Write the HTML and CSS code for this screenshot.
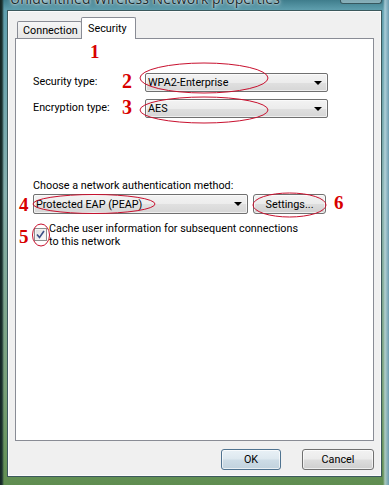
FILE: index.html
```html
<!DOCTYPE html>
<html>
<head>
<meta charset="utf-8">
<link rel="stylesheet" href="styles.css">
</head>
<body>
<div class="frame">
  <div class="titlebar">
    <span class="title">Unidentified Wireless Network properties</span>
    <span class="closebtn"></span>
  </div>
  <div class="dialog">
    <div class="tabs">
      <div class="tab">Connection</div>
      <div class="tab active">Security</div>
    </div>
    <div class="panel">
      <div class="mark-row"><span class="mark">1</span></div>
      <div class="field first">
        <span class="label">Security type:</span>
        <span class="mark">2</span>
        <div class="combo"><span class="combo-text">WPA2-Enterprise</span><span class="arrow"></span></div>
      </div>
      <div class="field">
        <span class="label">Encryption type:</span>
        <span class="mark">3</span>
        <div class="combo"><span class="combo-text">AES</span><span class="arrow"></span></div>
      </div>
      <div class="caption">Choose a network authentication method:</div>
      <div class="method-row">
        <span class="mark side">4</span>
        <div class="combo method"><span class="combo-text">Protected EAP (PEAP)</span><span class="arrow"></span></div>
        <div class="btn settings">Settings...</div>
        <span class="mark after">6</span>
      </div>
      <div class="check-row">
        <span class="mark side">5</span>
        <span class="checkbox">
          <svg width="9" height="9" viewBox="0 0 9 9"><path d="M1 4.5 L3.5 7.5 L8 1" fill="none" stroke="#3b4f86" stroke-width="1.6"/></svg>
        </span>
        <span class="check-text">Cache user information for subsequent connections<br>to this network</span>
      </div>
    </div>
    <div class="buttons">
      <div class="btn ok">OK</div>
      <div class="btn cancel">Cancel</div>
    </div>
  </div>
  <div class="bottom"></div>
  <svg class="annotations" width="389" height="485" viewBox="0 0 389 485">
    <g fill="none" stroke="#c8102e" stroke-width="1">
      <ellipse cx="108" cy="28" rx="26" ry="9"/>
      <ellipse cx="204" cy="78" rx="64" ry="15"/>
      <ellipse cx="204" cy="110" rx="64" ry="13"/>
      <ellipse cx="94" cy="204" rx="61" ry="9.5"/>
      <ellipse cx="41" cy="235" rx="8.5" ry="11"/>
      <ellipse cx="289.5" cy="205" rx="36.5" ry="12"/>
    </g>
  </svg>
</div>
</body>
</html>
```

FILE: styles.css
```css
* { box-sizing: border-box; }
html, body { margin: 0; padding: 0; }
body {
  width: 389px;
  height: 485px;
  overflow: hidden;
  font-family: Roboto, "Liberation Sans", sans-serif;
  font-size: 10.8px;
  color: #000;
}
.frame {
  position: relative;
  width: 389px;
  height: 485px;
  display: flex;
  flex-direction: column;
  background:
    linear-gradient(to right, #132321 0, #1d3331 2px, rgba(0,0,0,0) 4px, rgba(0,0,0,0) 383px, rgba(200,225,235,0.7) 385px, #6c9cb0 389px),
    linear-gradient(to bottom, #3f7d8c 0, #5f9fae 10px, #86b0ae 40%, #78a078 80%, #5f8d50 100%);
}
.titlebar {
  height: 10px;
  overflow: hidden;
  display: flex;
  justify-content: space-between;
  padding: 0 7px 0 10px;
}
.title {
  font-family: "Open Sans", sans-serif;
  font-size: 14px;
  line-height: 14px;
  margin-top: -8px;
  color: #1a2a2c;
  text-shadow: 0 0 5px #ffffff, 0 0 2px #ffffff;
}
.closebtn {
  width: 42px;
  height: 4px;
  border: 1px solid #37585f;
  border-top: none;
  border-radius: 0 0 3px 3px;
  background: rgba(255,255,255,0.35);
}
.dialog {
  flex: 1;
  margin: 0 7px;
  background: #f0f0f0;
  border: 1px solid #3b585c;
  box-shadow: inset 0 0 0 1px #fbfbfb;
  display: flex;
  flex-direction: column;
}
.tabs {
  height: 27px;
  display: flex;
  align-items: flex-end;
  padding-left: 9px;
}
.tab {
  height: 17px;
  width: 65px;
  border: 1px solid #898c95;
  border-bottom: none;
  border-radius: 2px 2px 0 0;
  background: linear-gradient(#f6f6f6, #e6e6e6);
  display: flex;
  align-items: center;
  padding-left: 5px;
  line-height: 13px;
}
.tab.active {
  position: relative;
  z-index: 1;
  height: 22px;
  width: 55px;
  margin-left: -1px;
  margin-bottom: -1px;
  background: #ffffff;
  padding-left: 6px;
  padding-bottom: 1px;
}
.panel {
  height: 403px;
  margin: 0 7px;
  background: #ffffff;
  border: 1px solid #898c95;
  padding-left: 17px;
}
.mark {
  font-family: "Liberation Serif", serif;
  font-weight: bold;
  font-size: 19px;
  line-height: 19px;
  color: #d80000;
}
.mark-row {
  height: 19px;
  margin-top: 3px;
  padding-left: 57px;
}
.field {
  display: grid;
  grid-template-columns: 89px 23px 183px;
  align-items: center;
  height: 19px;
  margin-top: 7px;
}
.field.first { margin-top: 12px; }
.field .label { margin-top: -2px; }
.field .mark { font-size: 20px; margin-top: -3px; }
.combo {
  height: 19px;
  border: 1px solid #707070;
  border-radius: 2px;
  background: linear-gradient(#f3f3f3 0%, #ececec 50%, #e0e0e0 51%, #d6d6d6 100%);
  box-shadow: inset 0 0 0 1px rgba(255,255,255,0.6);
  display: flex;
  align-items: center;
  justify-content: space-between;
  padding: 0 5px 0 2px;
}
.combo-text { line-height: 13px; }
.arrow {
  width: 0;
  height: 0;
  border-left: 4px solid transparent;
  border-right: 4px solid transparent;
  border-top: 4px solid #000;
}
.caption {
  line-height: 13px;
  margin-top: 61px;
}
.method-row {
  display: flex;
  align-items: center;
  height: 20px;
  margin-top: 2px;
  margin-left: -15px;
}
.mark.side { width: 15px; padding-left: 1px; }
.combo.method { width: 215px; height: 20px; }
.btn {
  border: 1px solid #707070;
  border-radius: 3px;
  background: linear-gradient(#f2f2f2 0%, #ebebeb 48%, #dddddd 52%, #cfcfcf 100%);
  box-shadow: inset 0 0 0 1px rgba(255,255,255,0.65);
  display: flex;
  align-items: center;
  justify-content: center;
  line-height: 13px;
}
.settings { width: 73px; height: 20px; margin-left: 5px; }
.mark.after { margin-left: 8px; margin-top: -3px; }
.check-row {
  display: flex;
  align-items: flex-start;
  margin-top: 8px;
  margin-left: -15px;
}
.check-row .mark { margin-top: 5px; width: 16px; }
.checkbox {
  width: 13px;
  height: 13px;
  margin-top: 6px;
  border: 1px solid #8e8f8f;
  background: linear-gradient(135deg, #dcdcdc, #ffffff);
  box-shadow: inset 0 0 0 1px #f4f4f4;
  display: flex;
  align-items: center;
  justify-content: center;
}
.checkbox svg { display: block; }
.check-text {
  margin-left: 2px;
  line-height: 13px;
}
.buttons {
  display: flex;
  justify-content: flex-end;
  gap: 21px;
  margin-top: 8px;
  margin-right: 7px;
}
.buttons .btn { height: 21px; }
.ok {
  width: 60px;
  border-color: #4f7390;
  background: linear-gradient(#e9f1f6 0%, #dde8ef 48%, #cddce6 52%, #c1d2dd 100%);
}
.cancel { width: 72px; }
.bottom { height: 8px; }
.annotations {
  position: absolute;
  left: 0;
  top: 0;
  pointer-events: none;
}
```
